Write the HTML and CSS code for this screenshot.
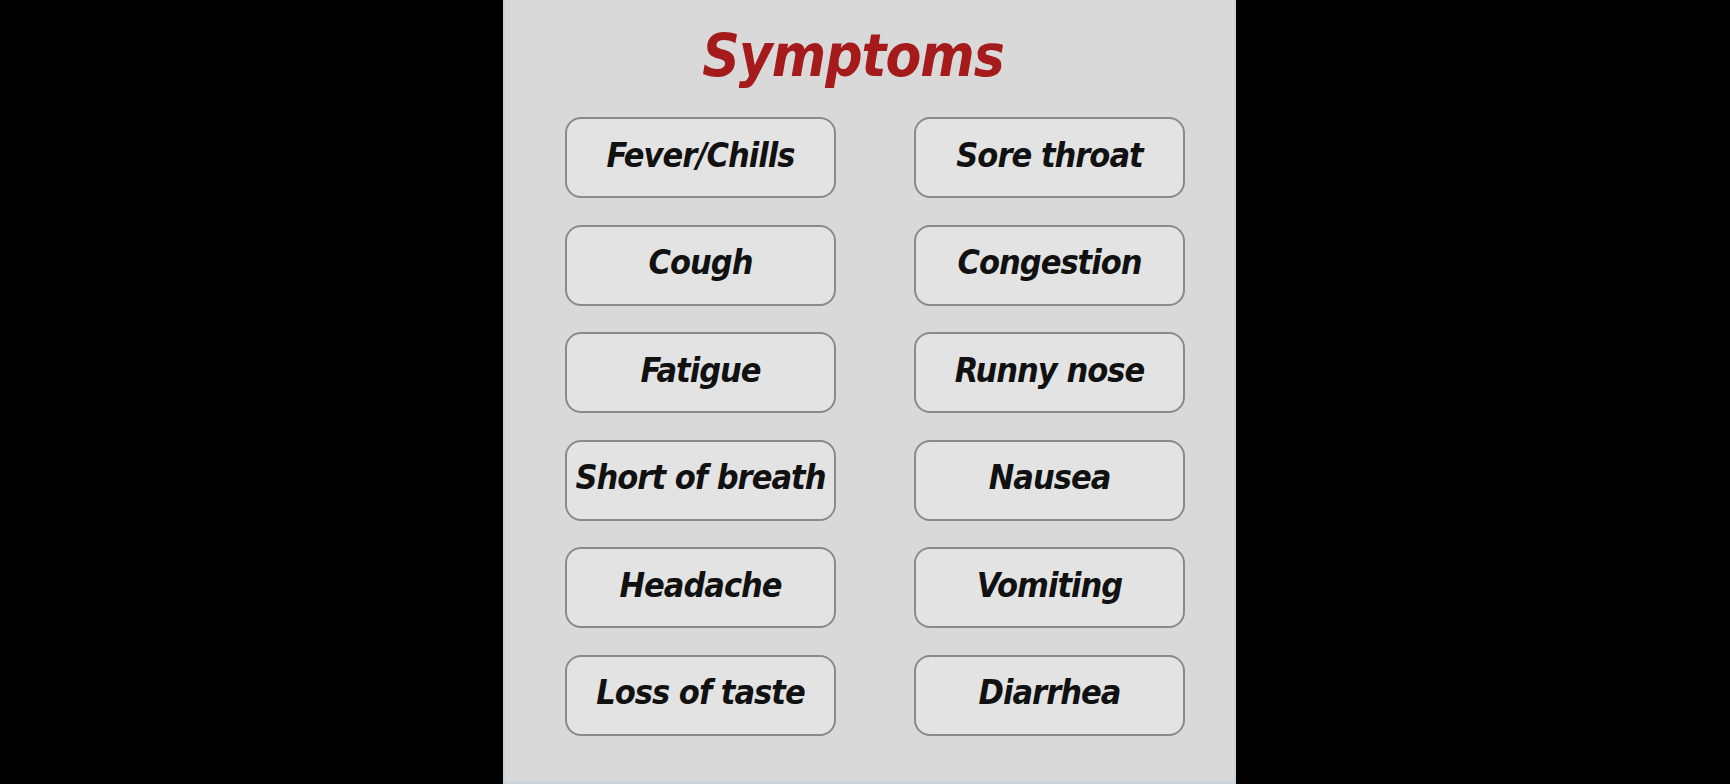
FILE: index.html
```html
<!DOCTYPE html>
<html>
<head>
<meta charset="utf-8">
<link rel="stylesheet" href="styles.css">
</head>
<body>
<div class="stage">
  <section class="panel">
    <h1 class="title">Symptoms</h1>
    <div class="grid">
      <button class="sym">Fever/Chills</button>
      <button class="sym">Sore throat</button>
      <button class="sym">Cough</button>
      <button class="sym">Congestion</button>
      <button class="sym">Fatigue</button>
      <button class="sym">Runny nose</button>
      <button class="sym">Short of breath</button>
      <button class="sym">Nausea</button>
      <button class="sym">Headache</button>
      <button class="sym">Vomiting</button>
      <button class="sym">Loss of taste</button>
      <button class="sym">Diarrhea</button>
    </div>
  </section>
</div>
</body>
</html>
```
FILE: styles.css
```css
html, body {
  margin: 0;
  padding: 0;
  background: #000;
  height: 100%;
}
.stage {
  height: 784px;
  padding-left: 503px;
  display: flex;
  overflow: hidden;
}
.panel {
  width: 729px;
  height: 782px;
  background: #d9d9d9;
  border-left: 2px solid #c9d3dd;
  border-right: 2px solid #c9d3dd;
  border-bottom: 2px solid #c9d3dd;
  box-sizing: content-box;
  padding: 0;
}
.title {
  margin: 0;
  padding: 23px 33px 0 0;
  height: 85px;
  box-sizing: border-box;
  text-align: center;
  font-family: "DejaVu Sans Condensed", "DejaVu Sans", sans-serif;
  font-weight: bold;
  font-style: italic;
  font-size: 58px;
  line-height: 66px;
  color: #a51a1a;
  letter-spacing: -1px;
}
.grid {
  margin-top: 32px;
  padding: 0 51px 0 60px;
  display: grid;
  grid-template-columns: 271px 271px;
  column-gap: 78px;
  row-gap: 26.5px;
}
.sym {
  height: 81px;
  box-sizing: border-box;
  border: 2px solid #8a8a8a;
  border-radius: 16px;
  background: #e3e3e3;
  font-family: "DejaVu Sans Condensed", "DejaVu Sans", sans-serif;
  font-weight: bold;
  font-style: italic;
  font-size: 34px;
  color: #111;
  letter-spacing: -1px;
  padding: 0 0 6px 0;
  white-space: nowrap;
}
```
